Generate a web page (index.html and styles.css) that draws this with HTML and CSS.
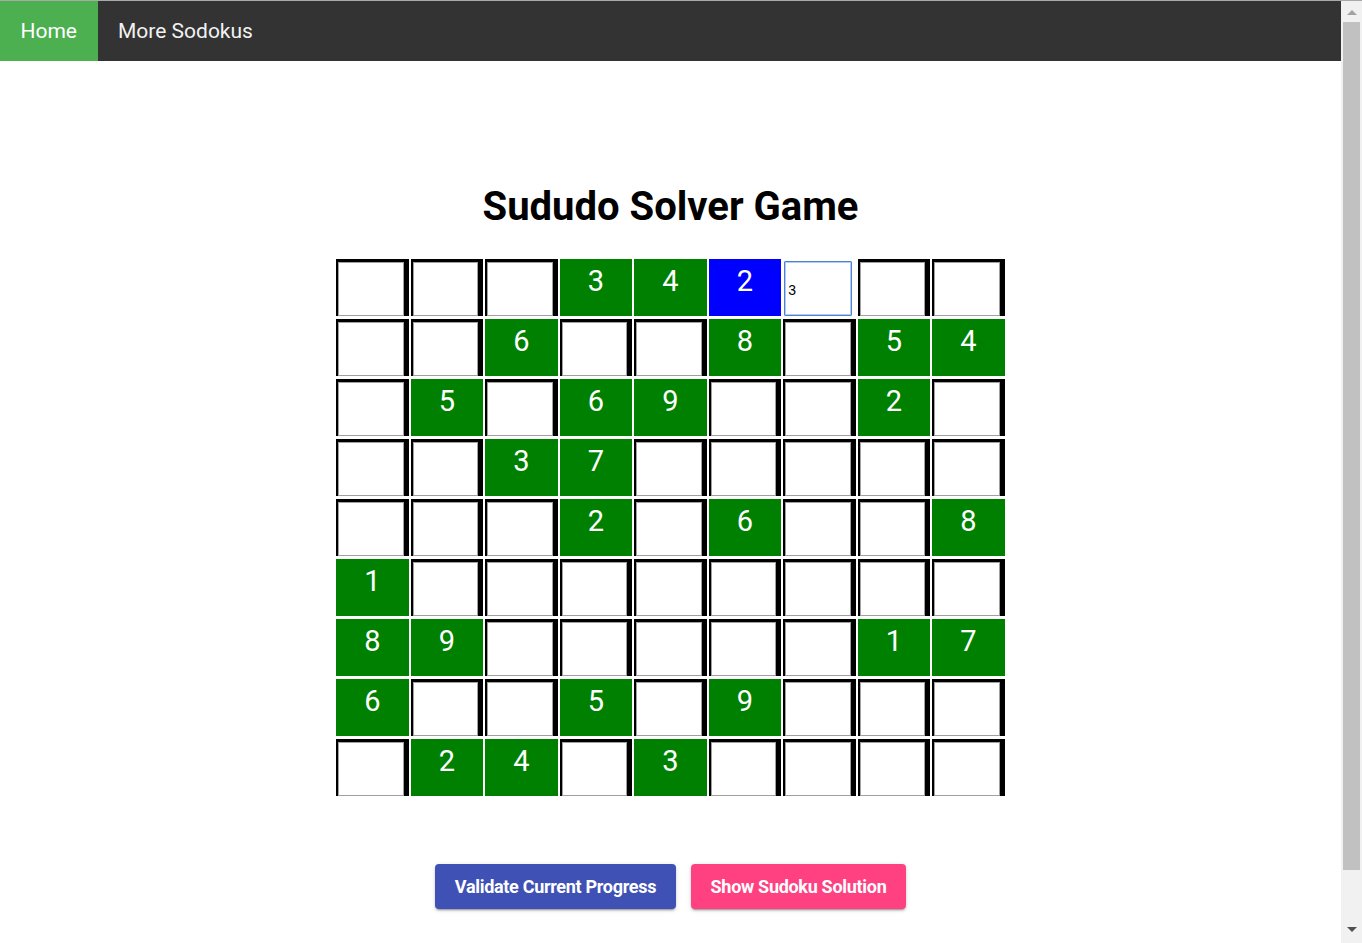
FILE: index.html
```html
<!DOCTYPE html>
<html lang="en">
<head>
<meta charset="utf-8">
<title>Sududo Solver Game</title>
<link rel="stylesheet" href="styles.css">
</head>
<body>
<div class="page">
  <nav class="topnav">
    <a class="nav-link active" href="#">Home</a>
    <a class="nav-link" href="#">More Sodokus</a>
  </nav>
  <main class="main">
    <h1 class="title">Sududo Solver Game</h1>
    <div class="board">
      <div class="cell empty"></div><div class="cell empty"></div><div class="cell empty"></div><div class="cell given">3</div><div class="cell given">4</div><div class="cell selected">2</div><div class="cell input-wrap"><input class="cell-input" type="text" value="3"></div><div class="cell empty"></div><div class="cell empty"></div>
      <div class="cell empty"></div><div class="cell empty"></div><div class="cell given">6</div><div class="cell empty"></div><div class="cell empty"></div><div class="cell given">8</div><div class="cell empty"></div><div class="cell given">5</div><div class="cell given">4</div>
      <div class="cell empty"></div><div class="cell given">5</div><div class="cell empty"></div><div class="cell given">6</div><div class="cell given">9</div><div class="cell empty"></div><div class="cell empty"></div><div class="cell given">2</div><div class="cell empty"></div>
      <div class="cell empty"></div><div class="cell empty"></div><div class="cell given">3</div><div class="cell given">7</div><div class="cell empty"></div><div class="cell empty"></div><div class="cell empty"></div><div class="cell empty"></div><div class="cell empty"></div>
      <div class="cell empty"></div><div class="cell empty"></div><div class="cell empty"></div><div class="cell given">2</div><div class="cell empty"></div><div class="cell given">6</div><div class="cell empty"></div><div class="cell empty"></div><div class="cell given">8</div>
      <div class="cell given">1</div><div class="cell empty"></div><div class="cell empty"></div><div class="cell empty"></div><div class="cell empty"></div><div class="cell empty"></div><div class="cell empty"></div><div class="cell empty"></div><div class="cell empty"></div>
      <div class="cell given">8</div><div class="cell given">9</div><div class="cell empty"></div><div class="cell empty"></div><div class="cell empty"></div><div class="cell empty"></div><div class="cell empty"></div><div class="cell given">1</div><div class="cell given">7</div>
      <div class="cell given">6</div><div class="cell empty"></div><div class="cell empty"></div><div class="cell given">5</div><div class="cell empty"></div><div class="cell given">9</div><div class="cell empty"></div><div class="cell empty"></div><div class="cell empty"></div>
      <div class="cell empty"></div><div class="cell given">2</div><div class="cell given">4</div><div class="cell empty"></div><div class="cell given">3</div><div class="cell empty"></div><div class="cell empty"></div><div class="cell empty"></div><div class="cell empty"></div>
    </div>
    <div class="actions">
      <button class="btn btn-validate" type="button">Validate Current Progress</button>
      <button class="btn btn-solution" type="button">Show Sudoku Solution</button>
    </div>
  </main>
</div>
<div class="scrollbar" aria-hidden="true">
  <span class="sb-arrow sb-up"></span>
  <span class="sb-thumb"></span>
  <span class="sb-arrow sb-down"></span>
</div>
</body>
</html>
```

FILE: styles.css
```css
html {
  border-top: 1px solid #a9a9a9;
}
body {
  margin: 0;
  font-family: Roboto, "Liberation Sans", sans-serif;
  background: #fff;
  color: #000;
}
.page {
  margin-right: 21px;
}
.topnav {
  display: flex;
  height: 60px;
  background: #333333;
}
.nav-link {
  display: flex;
  align-items: center;
  padding: 0 20.5px;
  color: #f2f2f2;
  text-decoration: none;
  font-size: 21px;
}
.nav-link.active {
  background: #4caf50;
  color: #fff;
}
.main {
  display: flex;
  flex-direction: column;
  align-items: center;
  padding: 122px 0 20px;
}
.title {
  margin: 0;
  font-size: 40px;
  line-height: 47px;
  font-weight: 700;
}
.board {
  margin-top: 29px;
  display: grid;
  grid-template-columns: repeat(9, 72.5px);
  grid-auto-rows: 57px;
  column-gap: 2px;
  row-gap: 3px;
}
.cell {
  box-sizing: border-box;
  font-size: 29px;
  line-height: 34px;
  text-align: center;
  color: #fff;
  padding-top: 5px;
}
.given {
  background: #008000;
}
.selected {
  background: #0000ff;
}
.empty {
  background: #fff;
  border-top: 3px solid #000;
  border-left: 2px solid #000;
  border-right: 5px solid #000;
  box-shadow: inset 0 0 0 1px #a0a0a0;
}
.input-wrap {
  padding: 2px 4px 0 1px;
}
.cell-input {
  box-sizing: border-box;
  width: 100%;
  height: 55px;
  margin: 0;
  padding: 2px 0 0 3px;
  border: 1px solid #4f82d3;
  box-shadow: inset 0 0 0 1px #b3caee;
  border-radius: 1px;
  outline: none;
  font-family: "Liberation Sans", Arial, sans-serif;
  font-size: 14px;
  color: #000;
  background: #fff;
}
.actions {
  margin-top: 68px;
  display: flex;
  gap: 15px;
}
.btn {
  height: 45px;
  padding: 0;
  border: none;
  border-radius: 4px;
  color: #fff;
  font-family: Roboto, "Liberation Sans", sans-serif;
  font-size: 18px;
  font-weight: 700;
  letter-spacing: -0.3px;
  box-shadow: 0 2px 2px rgba(0,0,0,0.14), 0 3px 1px -2px rgba(0,0,0,0.2), 0 1px 5px rgba(0,0,0,0.12);
  cursor: pointer;
}
.btn-validate {
  background: #3f51b5;
  width: 241px;
}
.btn-solution {
  background: #ff4081;
  width: 215px;
}
.scrollbar {
  position: fixed;
  top: 1px;
  right: 0;
  bottom: 0;
  width: 21px;
  background: #f1f1f1;
  display: flex;
  flex-direction: column;
  align-items: center;
}
.sb-arrow {
  width: 0;
  height: 0;
  border-left: 5px solid transparent;
  border-right: 5px solid transparent;
}
.sb-up {
  margin-top: 9px;
  border-bottom: 5px solid #a3a3a3;
}
.sb-thumb {
  margin-top: 7px;
  width: 17px;
  height: 848px;
  background: #c1c1c1;
}
.sb-down {
  margin-top: auto;
  margin-bottom: 11px;
  border-top: 5px solid #505050;
}
```
